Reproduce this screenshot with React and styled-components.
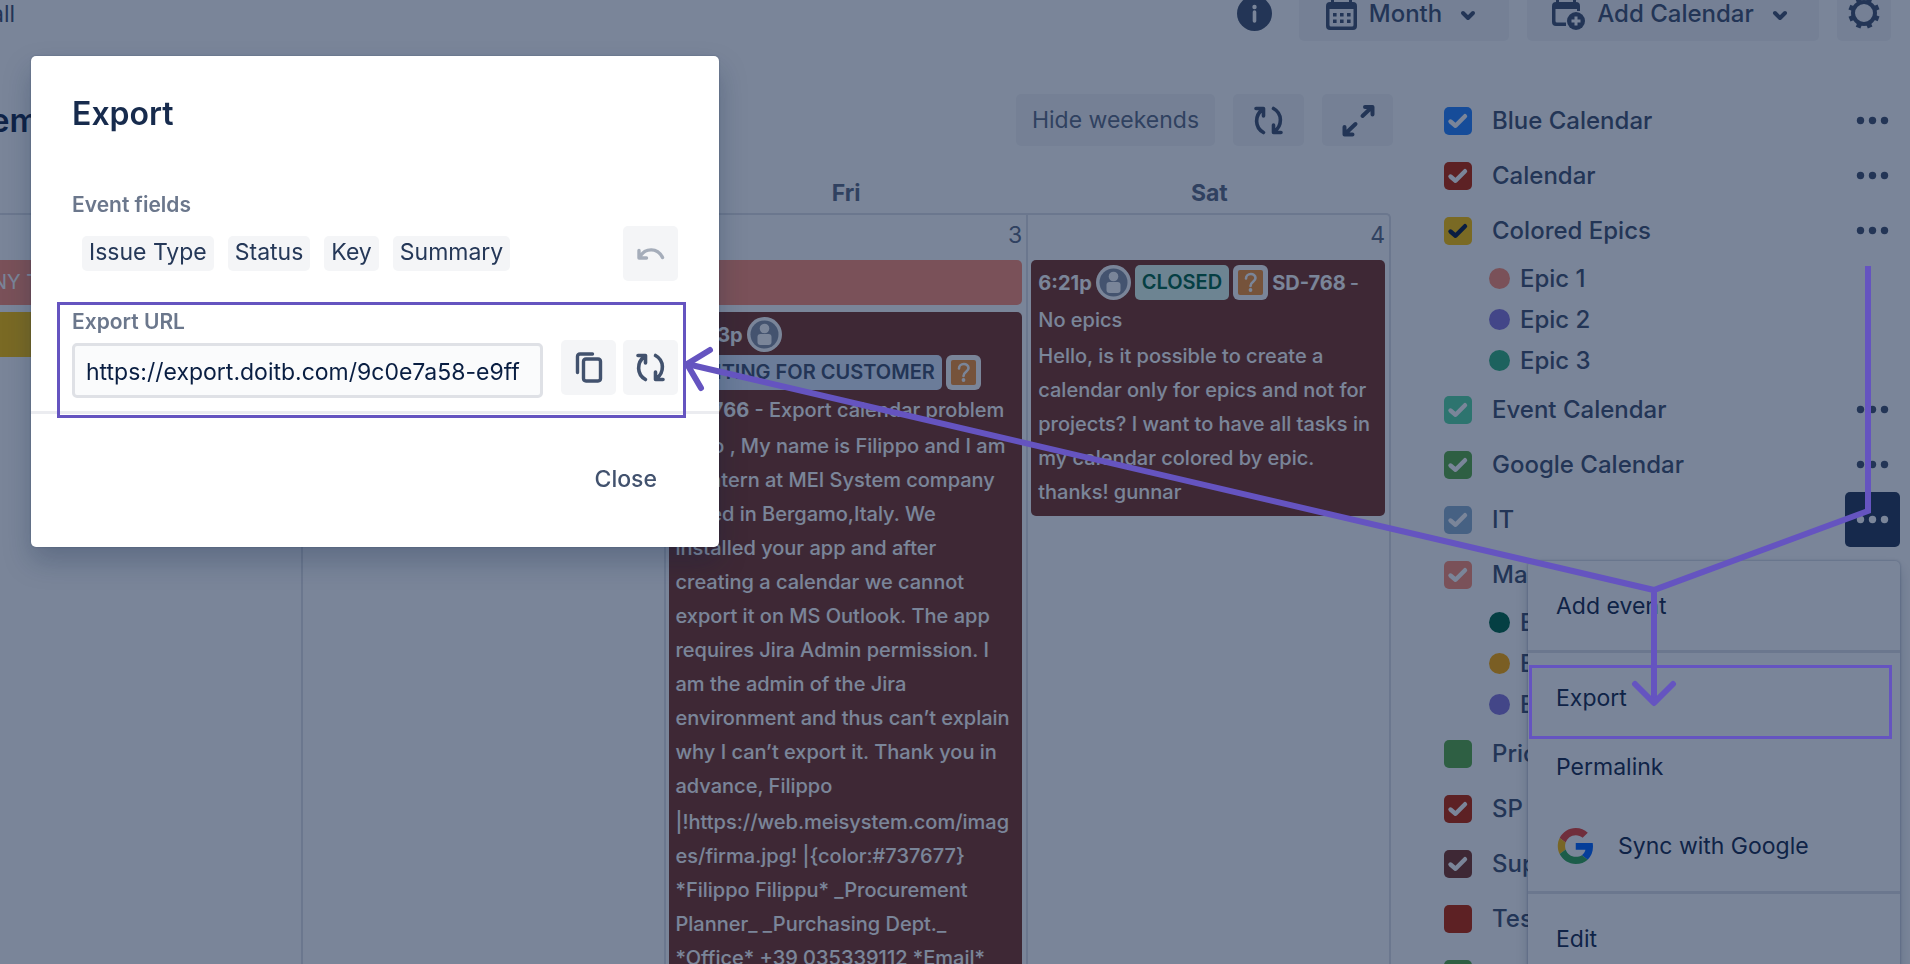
import React from "react";
import styled, { createGlobalStyle, css } from "styled-components";

const color = {
  text: "#172B4D",
  subtle: "#42526E",
  muted: "#5E6C84",
  label: "#6B778C",
  line: "#DFE1E6",
  fill: "#F4F5F7",
  accent: "#6554C0",
  event: "#7D3626",
  coral: "#FF8F73",
};

const GlobalStyle = createGlobalStyle`
  *, *::before, *::after { box-sizing: border-box; }
  body {
    margin: 0;
    overflow: hidden;
    background: #fff;
    color: ${color.text};
    font-family: Inter, "Liberation Sans", sans-serif;
    font-size: 23px;
  }
  button, input { font: inherit; color: inherit; }
`;

const Page = styled.div`
  position: relative;
  height: 100vh;
  overflow: hidden;
`;

/* ---------- top bar ---------- */

const TopBar = styled.header`
  display: flex;
  align-items: center;
  gap: 18px;
  height: 55px;
  margin-top: -14px;
  padding-right: 19px;
  color: ${color.subtle};
`;

const Crumb = styled.span`
  flex: 1;
  margin-left: -9px;
  font-size: 23px;
`;

const BarButton = styled.button`
  display: flex;
  align-items: center;
  justify-content: center;
  gap: 12px;
  width: ${(p) => p.$width}px;
  height: 55px;
  padding: 0;
  border: 0;
  border-radius: 5px;
  background: ${color.fill};
  font-weight: 500;
  font-size: 24px;
`;

const InfoButton = styled.button`
  display: flex;
  margin-right: 9px;
  padding: 0;
  border: 0;
  background: none;
`;

/* ---------- calendar ---------- */

const Body = styled.div`
  display: grid;
  grid-template-columns: minmax(0, 1fr) 517px;
  align-items: start;
  padding-top: 52px;
`;

const Toolbar = styled.div`
  display: flex;
  align-items: center;
  gap: 18px;
  height: 54px;
`;

const Title = styled.h1`
  flex: 1;
  margin: 0 0 0 -10px;
  font-size: 33px;
  font-weight: 600;
`;

const ToolButton = styled.button`
  display: flex;
  align-items: center;
  justify-content: center;
  width: ${(p) => p.$width}px;
  height: 52px;
  padding: 0;
  border: 0;
  border-radius: 5px;
  background: ${color.fill};
  color: ${(p) => (p.$dark ? color.subtle : color.muted)};
`;

const Month = styled.section`
  margin: 27px 2px 0 -62px;
`;

const DayNames = styled.div`
  display: grid;
  grid-template-columns: repeat(4, minmax(0, 1fr));
  height: 39px;
  line-height: 39px;
  text-align: center;
  font-weight: 700;
  color: ${color.muted};
`;

const Week = styled.div`
  display: grid;
  grid-template-columns: repeat(4, minmax(0, 1fr));
  grid-template-rows: 45px 45px 1fr;
  row-gap: 7px;
  min-height: 900px;
  border: 2px solid ${color.line};
  border-width: 2px 2px 0 0;
  border-radius: 0 5px 0 0;
`;

const Day = styled.div`
  grid-column: ${(p) => p.$col};
  grid-row: 1 / 4;
  padding: 6px 4px 0 0;
  border-left: ${(p) => (p.$col > 1 ? 2 : 0)}px solid ${color.line};
  text-align: right;
  line-height: 28px;
  color: ${color.muted};
`;

const eventBase = css`
  border-radius: 5px;
  color: #fff;
  font-size: 20px;
  font-weight: 500;
`;

const Bar = styled.div`
  ${eventBase}
  grid-column: ${(p) => p.$cols};
  grid-row: ${(p) => p.$row};
  margin: 45px 4px -45px 0;
  padding-left: 54px;
  line-height: 45px;
  font-weight: 400;
  background: ${(p) => p.$bg};
`;

const Event = styled.article`
  ${eventBase}
  grid-column: ${(p) => p.$col};
  grid-row: ${(p) => p.$row} / 4;
  align-self: start;
  margin: 45px 4px 0 5px;
  padding: 5px 0 5px 7px;
  background: ${color.event};
  white-space: nowrap;
`;

const EventLine = styled.div`
  display: flex;
  align-items: center;
  gap: 4px;
  height: 35px;
  margin-bottom: 3px;
`;

const EventText = styled.p`
  margin: 0 0 2px;
  line-height: 34px;
`;

const Lozenge = styled.span`
  height: 35px;
  padding: 0 7px;
  border-radius: 5px;
  background: ${(p) => p.$bg};
  color: ${(p) => p.$fg};
  line-height: 35px;
  font-weight: 600;
`;

/* ---------- calendar list ---------- */

const Sidebar = styled.aside`
  padding: 0 10px 0 51px;
  color: ${color.subtle};
  font-weight: 500;
  font-size: 24px;
`;

const Row = styled.div`
  position: relative;
  display: flex;
  align-items: center;
  height: 55px;
`;

const RowLabel = styled.label`
  display: flex;
  align-items: center;
  flex: 1;
  gap: 20px;
`;

const Tick = styled.span`
  display: grid;
  width: 28px;
  height: 28px;

  > * { grid-area: 1 / 1; }
`;

const TickBox = styled.input`
  appearance: none;
  width: 28px;
  height: 28px;
  margin: 0;
  border-radius: 5px;
  background: ${(p) => p.$bg};
`;

const MoreButton = styled.button`
  display: flex;
  align-items: center;
  justify-content: center;
  width: 55px;
  height: 55px;
  padding: 0;
  border: 0;
  border-radius: 5px;
  background: ${(p) => (p.$active ? "#253858" : "none")};
  color: ${(p) => (p.$active ? "#fff" : color.subtle)};
`;

const Epics = styled.ul`
  margin: 0;
  padding: 0 0 1px 45px;
  list-style: none;
`;

const Epic = styled.li`
  display: flex;
  align-items: center;
  gap: 10px;
  height: 41px;

  &::before {
    content: "";
    width: 21px;
    height: 21px;
    border-radius: 50%;
    background: ${(p) => p.$bg};
  }
`;

const Menu = styled.div`
  position: absolute;
  z-index: 1;
  top: 69px;
  right: 0;
  width: 372px;
  border-radius: 5px;
  background: #fff;
  box-shadow: 0 0 2px 1px rgba(9, 30, 66, 0.16), 0 7px 14px rgba(9, 30, 66, 0.2);
  color: ${color.text};
  font-weight: 400;
  font-size: 23px;
`;

const MenuGroup = styled.div`
  padding: 10px 0 ${(p) => p.$bottom}px;

  & + & { border-top: 3px solid ${color.line}; }
`;

const MenuItem = styled.button`
  position: relative;
  display: flex;
  align-items: center;
  gap: 24px;
  width: 100%;
  height: ${(p) => (p.$tall ? 90 : 69)}px;
  padding: 0 28px;
  border: 0;
  background: none;
`;

/* ---------- overlay ---------- */

const Blanket = styled.div`
  position: fixed;
  z-index: 2;
  inset: 0;
  background: rgba(9, 30, 66, 0.54);
`;

const Dialog = styled.div`
  position: fixed;
  z-index: 3;
  top: 56px;
  left: 31px;
  width: 688px;
  border-radius: 5px;
  background: #fff;
  box-shadow: 0 0 2px rgba(9, 30, 66, 0.31), 0 14px 28px rgba(9, 30, 66, 0.25);
`;

const DialogBody = styled.div`
  padding: 38px 41px 13px;
  border-bottom: 3px solid #ebecf0;
`;

const DialogTitle = styled.h2`
  margin: 0 0 57px;
  font-size: 32px;
  line-height: 40px;
  font-weight: 600;
`;

const FieldLabel = styled.label`
  display: block;
  line-height: 28px;
  font-size: 21px;
  font-weight: 600;
  color: ${color.label};
`;

const TagRow = styled.div`
  display: flex;
  align-items: center;
  gap: 14px;
  height: 55px;
  margin: 7px 0 27px;
  padding-left: 10px;
`;

const Tag = styled.span`
  height: 35px;
  padding: 0 7px;
  border-radius: 5px;
  background: ${color.fill};
  color: #253858;
  line-height: 33px;
`;

const IconButton = styled.button`
  display: flex;
  align-items: center;
  justify-content: center;
  flex: none;
  width: 55px;
  height: 55px;
  margin-left: ${(p) => (p.$push ? "auto" : 0)};
  padding: 0;
  border: 0;
  border-radius: 5px;
  background: ${color.fill};
  color: ${(p) => (p.disabled ? "#A5ADBA" : color.subtle)};
`;

const UrlField = styled.div`
  position: relative;
`;

const UrlRow = styled.div`
  display: flex;
  gap: 7px;
  padding-top: 4px;
`;

const UrlInput = styled.input`
  flex: 1;
  min-width: 0;
  height: 55px;
  margin: 3px 11px 0 0;
  padding: 2px 11px 0;
  border: 3px solid ${color.line};
  border-radius: 5px;
  background: #fafbfc;
  color: #091e42;
`;

const DialogFooter = styled.div`
  display: flex;
  justify-content: flex-end;
  padding: 37px 45px 41px;
`;

const CloseButton = styled.button`
  height: 55px;
  padding: 0 17px;
  border: 0;
  background: none;
  color: ${color.subtle};
  font-weight: 500;
`;

/* ---------- annotations ---------- */

const UrlFrame = styled.span`
  position: absolute;
  inset: -6px -8px -20px -15px;
  border: 3px solid ${color.accent};
  pointer-events: none;
`;

/* Sits over the Export entry of the popup menu, above the blanket. */
const MenuFrame = styled.span`
  position: absolute;
  z-index: 4;
  top: 665px;
  right: 18px;
  width: 363px;
  height: 74px;
  border: 3px solid ${color.accent};
  pointer-events: none;
`;

const Arrows = styled.svg`
  position: fixed;
  z-index: 4;
  inset: 0;
  width: 100%;
  height: 100%;
  pointer-events: none;
`;

/* ---------- icons ---------- */

const Stroke = ({ d, width = 4 }) => (
  <svg width="35" height="35" viewBox="-17.500 -17.500 35 35" fill="none" stroke="currentColor"
    strokeWidth={width} strokeLinecap="round" strokeLinejoin="round" aria-hidden="true">
    <path d={d} />
  </svg>
);

const RefreshIcon = () => (
  <Stroke width={3.6} d="M-5 12C-14 7-14-5-6-11M-12.5-12H-5V-4.500M5-12C14-7 14 5 6 11M12.500 12H5V4.500" />
);
const ExpandIcon = () => (
  <Stroke width={4} d="M5-4.500 14-13M7.500-13.500H15V-6M-2 3.500-12 13M-13 6.500V14H-5" />
);
const UndoIcon = () => (
  <Stroke width={3.4} d="M-11.500-3V4.500H-4M-10.500 3C-5-6 7-6 12 4" />
);
const CopyIcon = () => (
  <Stroke width={3.4} d="M-11 5V-11Q-11-13.500-8.500-13.500H4M-2.500-8.500H9.500Q12-8.500 12-6V11Q12 13.500 9.500 13.500H-2.500Q-5 13.500-5 11V-6Q-5-8.500-2.500-8.500Z" />
);

const Chevron = () => (
  <svg width="28" height="20" viewBox="-14 -10 28 20" fill="none" stroke="currentColor"
    strokeWidth="4" strokeLinecap="round" strokeLinejoin="round" aria-hidden="true">
    <path d="M-5-1 0 4 5-1" />
  </svg>
);

const InfoIcon = () => (
  <svg width="35" height="35" viewBox="0 0 35 35" aria-hidden="true">
    <circle cx="17.5" cy="17.5" r="17.5" fill={color.subtle} />
    <circle cx="17.500" cy="11" r="2.200" fill="#fff" />
    <path d="M17.500 16v9" stroke="#fff" strokeWidth="3.600" strokeLinecap="round" />
  </svg>
);

const CalendarIcon = () => (
  <svg width="31" height="36" viewBox="0 0 31 36" fill="currentColor" aria-hidden="true">
    <path d="M5 1h3v5h15V1h3v5h1q4 0 4 4v20q0 4-4 4H4q-4 0-4-4V10q0-4 4-4h1zM3.500 13v16q0 1.500 1.500 1.500h21q1.500 0 1.500-1.500V13z" />
    <path d="M7 17h3.600v3.400H7zM14 17h3.600v3.400H14zM21 17h3.600v3.400H21zM7 23.500h3.600v3.400H7zM14 23.500h3.600v3.400H14zM21 23.500h3.600v3.400H21z" />
  </svg>
);

const AddCalendarIcon = () => (
  <svg width="33" height="36" viewBox="0 0 33 36" aria-hidden="true">
    <path fill="currentColor" d="M4 1h3v5h14V1h3v5q4 0 4 4v5h-3v-2H3.500v12q0 1.500 1.500 1.500h9V30H4q-4 0-4-4V10q0-4 4-4z" />
    <circle cx="24" cy="25" r="9" fill="currentColor" />
    <path d="M24 20.500v9M19.500 25h9" stroke="#fff" strokeWidth="3" />
  </svg>
);

const GearIcon = () => (
  <svg width="36" height="36" viewBox="-18 -17 36 36" fill="none" stroke="currentColor" aria-hidden="true">
    <circle r="11" strokeWidth="4" />
    {[22, 67, 112, 157, 202, 247, 292, 337].map((a) => (
      <path key={a} d="M-2.500-13.500H2.500" strokeWidth="4.500" strokeLinejoin="round" transform={`rotate(${a})`} />
    ))}
  </svg>
);

const MoreIcon = () => (
  <svg width="33" height="9" viewBox="-16.500 -4.500 33 9" fill="currentColor" aria-hidden="true">
    <circle cx="-12" r="3.700" /><circle r="3.700" /><circle cx="12" r="3.700" />
  </svg>
);

const CheckIcon = ({ dark }) => (
  <svg width="28" height="28" viewBox="0 0 28 28" fill="none" stroke={dark ? "#091E42" : "#fff"}
    strokeWidth="4.400" strokeLinecap="round" strokeLinejoin="round" aria-hidden="true">
    <path d="M6.500 14.500 11.500 18.700 21 9.200" />
  </svg>
);

const Avatar = () => (
  <svg width="35" height="35" viewBox="0 0 35 35" aria-hidden="true">
    <circle cx="17.500" cy="17.500" r="17.500" fill="#fff" />
    <circle cx="17.500" cy="17.500" r="14" fill="#8993A4" />
    <circle cx="17.500" cy="11.500" r="4.800" fill="#fff" />
    <path fill="#fff" d="M10.500 20q0-3 3-3h8q3 0 3 3v5q0 3-3 3h-8q-3 0-3-3z" />
  </svg>
);

const QuestionIcon = () => (
  <svg width="35" height="35" viewBox="0 0 35 35" aria-hidden="true">
    <rect width="35" height="35" rx="6" fill="#fff" />
    <rect x="5" y="5" width="25" height="25" rx="2" fill="#F79232" />
    <path d="M13 13.500c0-6 9.500-6 9.500-.5 0 4-5 3.500-5 8" fill="none" stroke="#fff" strokeWidth="2.600" strokeLinecap="round" />
    <circle cx="17.500" cy="25" r="1.900" fill="#fff" />
  </svg>
);

const GoogleIcon = () => (
  <svg width="38" height="36" viewBox="-2 0 50 48" aria-hidden="true">
    <path fill="#EA4335" d="M24 9.500c3.540 0 6.710 1.220 9.210 3.600l6.850-6.850C35.900 2.380 30.470 0 24 0 14.620 0 6.510 5.380 2.560 13.220l7.980 6.190C12.430 13.720 17.740 9.500 24 9.500z" />
    <path fill="#0065FF" d="M46.980 24.550c0-1.570-.15-3.090-.38-4.550H24v9.020h12.940c-.58 2.960-2.260 5.480-4.780 7.180l7.730 6c4.510-4.180 7.090-10.360 7.090-17.650z" />
    <path fill="#FBBC05" d="M10.530 28.590c-.48-1.450-.76-2.990-.76-4.590s.27-3.140.76-4.590l-7.980-6.190C.92 16.460 0 20.120 0 24s.92 7.540 2.560 10.780l7.970-6.190z" />
    <path fill="#34A853" d="M24 48c6.480 0 11.930-2.130 15.890-5.810l-7.730-6c-2.150 1.450-4.920 2.300-8.160 2.300-6.260 0-11.570-4.220-13.470-9.910l-7.980 6.190C6.510 42.620 14.620 48 24 48z" />
  </svg>
);

/* ---------- data ---------- */

const calendars = [
  { name: "Blue Calendar", bg: "#2684FF" },
  { name: "Calendar", bg: "#BF2600" },
  {
    name: "Colored Epics", bg: "#FFC400", dark: true,
    epics: [["Epic 1", color.coral], ["Epic 2", "#8777D9"], ["Epic 3", "#36B37E"]],
  },
  { name: "Event Calendar", bg: "#57D9A3" },
  { name: "Google Calendar", bg: "#5AAC44" },
  { name: "IT", bg: "#8FB0D0", open: true },
  {
    name: "Marketing", bg: color.coral,
    epics: [["Epic 1", "#006644"], ["Epic 2", "#FFAB00"], ["Epic 3", "#8777D9"]],
  },
  { name: "Priority", bg: "#5AAC44", off: true },
  { name: "SP", bg: "#BF2600" },
  { name: "Support", bg: color.event },
  { name: "Test", bg: "#BF2600", off: true },
  { name: "Work", bg: "#5AAC44", off: true },
];

const fields = ["Issue Type", "Status", "Key", "Summary"];

const Lines = ({ of }) => of.map((line) => <React.Fragment key={line}>{line}<br /></React.Fragment>);

function CalendarMenu() {
  return (
    <Menu>
      <MenuGroup $bottom={10}><MenuItem>Add event</MenuItem></MenuGroup>
      <MenuGroup $bottom={0}>
        <MenuItem>Export</MenuItem>
        <MenuItem>Permalink</MenuItem>
        <MenuItem $tall><GoogleIcon />Sync with Google</MenuItem>
      </MenuGroup>
      <MenuGroup $bottom={10}><MenuItem>Edit</MenuItem></MenuGroup>
    </Menu>
  );
}

function CalendarRow({ item }) {
  const id = `cal-${item.name.toLowerCase().replace(/ /g, "-")}`;
  return (
    <>
      <Row>
        <RowLabel htmlFor={id}>
          <Tick>
            <TickBox id={id} type="checkbox" defaultChecked={!item.off} $bg={item.bg} />
            {!item.off && <CheckIcon dark={item.dark} />}
          </Tick>
          {item.name}
        </RowLabel>
        <MoreButton aria-label={`${item.name} actions`} $active={item.open}><MoreIcon /></MoreButton>
        {item.open && <CalendarMenu />}
      </Row>
      {item.epics && (
        <Epics>
          {item.epics.map(([name, bg]) => <Epic key={name} $bg={bg}>{name}</Epic>)}
        </Epics>
      )}
    </>
  );
}

function ExportDialog() {
  return (
    <Dialog role="dialog" aria-labelledby="export-title">
      <DialogBody>
        <DialogTitle id="export-title">Export</DialogTitle>
        <FieldLabel as="div">Event fields</FieldLabel>
        <TagRow>
          {fields.map((f) => <Tag key={f}>{f}</Tag>)}
          <IconButton $push disabled aria-label="Undo"><UndoIcon /></IconButton>
        </TagRow>
        <UrlField>
          <FieldLabel htmlFor="export-url">Export URL</FieldLabel>
          <UrlRow>
            <UrlInput id="export-url" readOnly value="https://export.doitb.com/9c0e7a58-e9ff" />
            <IconButton aria-label="Copy"><CopyIcon /></IconButton>
            <IconButton aria-label="Regenerate"><RefreshIcon /></IconButton>
          </UrlRow>
          <UrlFrame />
        </UrlField>
      </DialogBody>
      <DialogFooter><CloseButton>Close</CloseButton></DialogFooter>
    </Dialog>
  );
}

export default function App() {
  return (
    <Page>
      <GlobalStyle />
      <TopBar>
        <Crumb>all</Crumb>
        <InfoButton aria-label="Info"><InfoIcon /></InfoButton>
        <BarButton $width={210}><CalendarIcon />Month<Chevron /></BarButton>
        <BarButton $width={292}><AddCalendarIcon />Add Calendar<Chevron /></BarButton>
        <BarButton $width={54} aria-label="Settings"><GearIcon /></BarButton>
      </TopBar>
      <Body>
        <main>
          <Toolbar>
            <Title>em</Title>
            <ToolButton $width={199}>Hide weekends</ToolButton>
            <ToolButton $width={71} $dark aria-label="Refresh"><RefreshIcon /></ToolButton>
            <ToolButton $width={71} $dark aria-label="Full screen"><ExpandIcon /></ToolButton>
          </Toolbar>
          <Month>
            <DayNames><span /><span /><span>Fri</span><span>Sat</span></DayNames>
            <Week>
              <Day $col={1} /><Day $col={2} /><Day $col={3}>3</Day><Day $col={4}>4</Day>
              <Bar $cols="1 / 4" $row={1} $bg={color.coral}>NY T</Bar>
              <Bar $cols="1 / 2" $row={2} $bg="#FFC400" />
              <Event $col={3} $row={2}>
                <EventLine><b>10:33p</b><Avatar /></EventLine>
                <EventLine>
                  <Lozenge $bg="#DEEBFF" $fg={color.subtle}>WAITING FOR CUSTOMER</Lozenge>
                  <QuestionIcon />
                </EventLine>
                <EventText><b>SD-766</b> - Export calendar problem</EventText>
                <EventText>
                  <Lines of={[
                    "Hello , My name is Filippo and I am",
                    "an intern at MEI System company",
                    "based in Bergamo,Italy. We",
                    "installed your app and after",
                    "creating a calendar we cannot",
                    "export it on MS Outlook. The app",
                    "requires Jira Admin permission. I",
                    "am the admin of the Jira",
                    "environment and thus can’t explain",
                    "why I can’t export it. Thank you in",
                    "advance, Filippo",
                  ]} />
                </EventText>
                <EventText>
                  <Lines of={[
                    "|!https://web.meisystem.com/imag",
                    "es/firma.jpg! |{color:#737677}",
                    "*Filippo Filippu* _Procurement",
                    "Planner_ _Purchasing Dept._",
                    "*Office* +39 035339112 *Email*",
                  ]} />
                </EventText>
              </Event>
              <Event $col={4} $row={1}>
                <EventLine>
                  <b>6:21p</b>
                  <Avatar />
                  <Lozenge $bg="#E3FCEF" $fg="#006644">CLOSED</Lozenge>
                  <QuestionIcon />
                  <b>SD-768</b> -
                </EventLine>
                <EventText>No epics</EventText>
                <EventText>
                  <Lines of={[
                    "Hello, is it possible to create a",
                    "calendar only for epics and not for",
                    "projects? I want to have all tasks in",
                    "my calendar colored by epic.",
                    "thanks! gunnar",
                  ]} />
                </EventText>
              </Event>
            </Week>
          </Month>
        </main>
        <Sidebar>
          {calendars.map((c) => <CalendarRow key={c.name} item={c} />)}
        </Sidebar>
      </Body>
      <Blanket />
      <ExportDialog />
      <MenuFrame />
      <Arrows viewBox="0 0 1910 964" preserveAspectRatio="none" fill="none" stroke={color.accent}
        strokeWidth="6" aria-hidden="true">
        <path d="M1868 266V511L1654 590 687 364M1654 590V703" />
        <path d="M710 350 687 364 701 388M1635 684 1654 703 1673 684" strokeLinecap="round" strokeLinejoin="round" />
      </Arrows>
    </Page>
  );
}
